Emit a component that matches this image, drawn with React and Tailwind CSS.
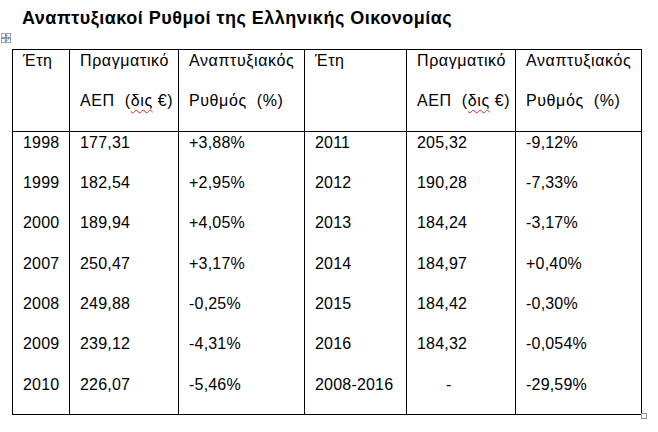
import React from "react";

const rows = [
  ["1998", "177,31", "+3,88%", "2011", "205,32", "-9,12%"],
  ["1999", "182,54", "+2,95%", "2012", "190,28", "-7,33%"],
  ["2000", "189,94", "+4,05%", "2013", "184,24", "-3,17%"],
  ["2007", "250,47", "+3,17%", "2014", "184,97", "+0,40%"],
  ["2008", "249,88", "-0,25%", "2015", "184,42", "-0,30%"],
  ["2009", "239,12", "-4,31%", "2016", "184,32", "-0,054%"],
  ["2010", "226,07", "-5,46%", "2008-2016", "-", "-29,59%"],
];

const cell = "border-x border-black align-top pt-[2px] pl-[10px] pr-0 leading-[18px] whitespace-nowrap";

const Dis = () => (
  <span className="underline decoration-wavy decoration-[#e02020] decoration-[1px] underline-offset-[3px]">
    δις
  </span>
);

const HeadCell = ({ top, bottom }) => (
  <td className={`${cell} border-y tracking-[0.6px]`}>
    <div className="h-[40px]">{top}</div>
    <div>{bottom}</div>
  </td>
);

// little table handles Word draws around a selected table
const MoveHandle = () => (
  <div className="absolute left-[1px] top-[33px] w-[10px] h-[10px] border border-[#a0a0a0] bg-white flex items-center justify-center">
    <svg width="8" height="8" viewBox="0 0 8 8" fill="none" stroke="#2b5fd9" strokeWidth="1">
      <path d="M4 0.5v7M0.5 4h7" />
      <path d="M2.8 1.7L4 0.5l1.2 1.2M2.8 6.3L4 7.5l1.2-1.2M1.7 2.8L0.5 4l1.2 1.2M6.3 2.8L7.5 4 6.3 5.2" />
    </svg>
  </div>
);

export default function App() {
  return (
    <div className="relative w-[658px] h-[432px] bg-white text-black font-['Liberation_Sans',Arial,sans-serif] overflow-hidden">
      <MoveHandle />
      <div className="absolute left-[641px] top-[413px] w-[6px] h-[6px] border border-[#909090] bg-white" />

      <h1 className="pl-[22px] pt-[7px] text-[18px] font-bold leading-[22px] tracking-[0.5px]">
        Αναπτυξιακοί Ρυθμοί της Ελληνικής Οικονομίας
      </h1>

      <table className="ml-[12px] mt-[20px] table-fixed border-collapse text-[16px]">
        <colgroup>
          <col className="w-[57px]" />
          <col className="w-[109px]" />
          <col className="w-[126px]" />
          <col className="w-[102px]" />
          <col className="w-[109px]" />
          <col className="w-[126px]" />
        </colgroup>
        <thead>
          <tr className="h-[82px]">
            <td className={`${cell} border-y tracking-[0.6px]`}>Έτη</td>
            <HeadCell top="Πραγματικό" bottom={<>ΑΕΠ&nbsp; (<Dis /> €)</>} />
            <HeadCell top="Αναπτυξιακός" bottom={<>Ρυθμός&nbsp; (%)</>} />
            <td className={`${cell} border-y tracking-[0.6px]`}>Έτη</td>
            <HeadCell top="Πραγματικό" bottom={<>ΑΕΠ&nbsp; (<Dis /> €)</>} />
            <HeadCell top="Αναπτυξιακός" bottom={<>Ρυθμός&nbsp; (%)</>} />
          </tr>
        </thead>
        <tbody>
          {rows.map((r, ri) => (
            <tr key={r[0]} className="h-[40.4px]">
              {r.map((v, i) => (
                <td
                  key={i}
                  className={`${cell} tracking-[0.2px] ${ri === rows.length - 1 ? "border-b" : ""}`}
                >
                  {v === "-" ? <span className="pl-[29px]">-</span> : v}
                </td>
              ))}
            </tr>
          ))}
        </tbody>
      </table>
    </div>
  );
}
